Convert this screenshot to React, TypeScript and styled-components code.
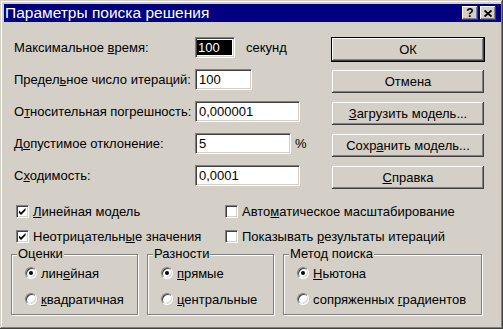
import styled, { createGlobalStyle } from "styled-components";

const GlobalStyle = createGlobalStyle`
  body {
    margin: 0;
    background: #d4d0c8;
    font-family: "Liberation Sans", Arial, sans-serif;
    font-size: 13px;
    color: #000;
  }
`;

const Window = styled.div`
  width: 503px;
  height: 329px;
  box-sizing: border-box;
  padding: 4px 2px 3px 4px;
  background: #d4d0c8;
  box-shadow: inset -1px -1px #404040, inset 1px 1px #d4d0c8,
    inset -2px -2px #808080, inset 2px 2px #fff;
  display: flex;
  flex-direction: column;
`;

const TitleBar = styled.div`
  height: 18px;
  background: #000080;
  display: flex;
  align-items: center;
  padding: 0 5px 0 1px;
`;

const TitleText = styled.span`
  flex: 1;
  color: #fff;
  font-size: 15.5px;
  line-height: 18px;
  white-space: nowrap;
`;

const TitleButton = styled.div<{ $gap?: number }>`
  width: 16px;
  height: 14px;
  box-sizing: border-box;
  margin-left: ${(p) => p.$gap ?? 0}px;
  background: #d4d0c8;
  box-shadow: inset -1px -1px #404040, inset 1px 1px #fff,
    inset -2px -2px #808080;
  display: flex;
  align-items: center;
  justify-content: center;
  font-weight: bold;
  font-size: 12px;
  line-height: 14px;
`;

const Body = styled.div`
  flex: 1;
  padding: 15px 0 0 7px;
  display: flex;
  flex-direction: column;
`;

const TopSection = styled.div`
  display: flex;
`;

const Form = styled.div`
  width: 318px;
  margin-left: 3px;
  display: flex;
  flex-direction: column;
  gap: 11px;
`;

const Row = styled.div`
  display: flex;
  align-items: center;
  height: 21px;
`;

const Label = styled.span`
  width: 181px;
  white-space: nowrap;
`;

const Field = styled.div<{ $width: number }>`
  width: ${(p) => p.$width}px;
  height: 21px;
  box-sizing: border-box;
  background: #fff;
  border: 1px solid;
  border-color: #808080 #fff #fff #808080;
  box-shadow: inset 1px 1px #404040, inset -1px -1px #d4d0c8;
  padding: 0 3px;
  display: flex;
  align-items: center;
`;

const Selected = styled.span`
  background: #000;
  color: #fff;
  align-self: stretch;
  margin: 2px -1px 2px -2px;
  padding-left: 1px;
  flex: 1;
  display: flex;
  align-items: center;
`;

const Suffix = styled.span<{ $gap: number }>`
  margin-left: ${(p) => p.$gap}px;
`;

const ButtonColumn = styled.div`
  margin-top: 1px;
  width: 152px;
  display: flex;
  flex-direction: column;
  gap: 9px;
`;

const Button = styled.div<{ $default?: boolean }>`
  height: 23px;
  box-sizing: border-box;
  background: #d4d0c8;
  box-shadow: inset -1px -1px #404040, inset 1px 1px #fff,
    inset -2px -2px #808080;
  outline: ${(p) => (p.$default ? "1px solid #000" : "none")};
  display: flex;
  align-items: center;
  justify-content: center;
  white-space: nowrap;
`;

const Checks = styled.div`
  margin: 15px 0 0 5px;
  display: grid;
  grid-template-columns: 209px 1fr;
  row-gap: 10px;
`;

const CheckRow = styled.div`
  height: 15px;
  display: flex;
  align-items: center;
  gap: 4px;
  white-space: nowrap;
`;

const CheckBox = styled.div`
  width: 13px;
  height: 13px;
  box-sizing: border-box;
  background: #fff;
  border: 1px solid;
  border-color: #808080 #fff #fff #808080;
  box-shadow: inset 1px 1px #404040, inset -1px -1px #d4d0c8;
  display: flex;
  align-items: center;
  justify-content: center;
`;

const Groups = styled.div`
  margin-top: 10px;
  display: flex;
  gap: 9px;
`;

const Group = styled.div<{ $width: number }>`
  position: relative;
  width: ${(p) => p.$width}px;
  height: 61px;
  box-sizing: border-box;
  border: 1px solid #808080;
  box-shadow: inset 1px 1px #fff, 1px 1px #fff;
  padding: 10px 0 0 13px;
  display: flex;
  flex-direction: column;
  gap: 10px;
`;

const Legend = styled.span`
  position: absolute;
  top: -9px;
  left: 5px;
  padding: 0 1px;
  background: #d4d0c8;
  line-height: 15px;
`;

const RadioRow = styled.div`
  height: 16px;
  display: flex;
  align-items: center;
  gap: 4px;
  white-space: nowrap;
`;

const Radio = styled.div<{ $checked?: boolean }>`
  width: 12px;
  height: 12px;
  box-sizing: border-box;
  border-radius: 50%;
  background: #fff;
  border: 1px solid;
  border-color: #808080 #fff #fff #808080;
  box-shadow: inset 1px 1px #404040, inset -1px -1px #d4d0c8;
  display: flex;
  align-items: center;
  justify-content: center;

  &::after {
    content: "";
    width: 4px;
    height: 4px;
    border-radius: 50%;
    background: ${(p) => (p.$checked ? "#000" : "transparent")};
  }
`;

const Check = () => (
  <svg width="9" height="9" viewBox="0 0 9 9">
    <path d="M1 3.5 L3 5.5 L7.5 1 L7.5 3.5 L3 8 L1 6 Z" fill="#000" />
  </svg>
);

const CloseGlyph = () => (
  <svg width="8" height="7" viewBox="0 0 8 7">
    <path d="M0.5 0.5 L7.5 6.5 M7.5 0.5 L0.5 6.5" stroke="#000" strokeWidth="1.8" />
  </svg>
);

const fields = [
  { label: <>Максимальное <u>в</u>ремя:</>, value: "100", width: 40, selected: true, suffix: "секунд", gap: 11 },
  { label: <>Предел<u>ь</u>ное число итераций:</>, value: "100", width: 57 },
  { label: <>О<u>т</u>носительная погрешность:</>, value: "0,000001", width: 105 },
  { label: <>Д<u>о</u>пустимое отклонение:</>, value: "5", width: 96, suffix: "%", gap: 4 },
  { label: <>С<u>х</u>одимость:</>, value: "0,0001", width: 105 },
];

const buttons = [
  { text: <>ОК</>, def: true },
  { text: <>Отмена</> },
  { text: <><u>З</u>агрузить модель...</> },
  { text: <>Сохр<u>а</u>нить модель...</> },
  { text: <><u>С</u>правка</> },
];

const groups = [
  { title: "Оценки", width: 127, items: [<>лин<u>е</u>йная</>, <><u>к</u>вадратичная</>] },
  { title: "Разности", width: 127, items: [<><u>п</u>рямые</>, <><u>ц</u>ентральные</>] },
  { title: "Метод поиска", width: 199, items: [<><u>Н</u>ьютона</>, <>сопряженных <u>г</u>радиентов</>] },
];

export default function App() {
  return (
    <>
      <GlobalStyle />
      <Window>
        <TitleBar>
          <TitleText>Параметры поиска решения</TitleText>
          <TitleButton>?</TitleButton>
          <TitleButton $gap={2}>
            <CloseGlyph />
          </TitleButton>
        </TitleBar>
        <Body>
          <TopSection>
            <Form>
              {fields.map((f, i) => (
                <Row key={i}>
                  <Label>{f.label}</Label>
                  <Field $width={f.width}>
                    {f.selected ? <Selected>{f.value}</Selected> : f.value}
                  </Field>
                  {f.suffix && <Suffix $gap={f.gap ?? 0}>{f.suffix}</Suffix>}
                </Row>
              ))}
            </Form>
            <ButtonColumn>
              {buttons.map((b, i) => (
                <Button key={i} $default={b.def}>
                  {b.text}
                </Button>
              ))}
            </ButtonColumn>
          </TopSection>
          <Checks>
            <CheckRow>
              <CheckBox>
                <Check />
              </CheckBox>
              <span>
                <u>Л</u>инейная модель
              </span>
            </CheckRow>
            <CheckRow>
              <CheckBox />
              <span>
                Авто<u>м</u>атическое масштабирование
              </span>
            </CheckRow>
            <CheckRow>
              <CheckBox>
                <Check />
              </CheckBox>
              <span>
                Неотрицательн<u>ы</u>е значения
              </span>
            </CheckRow>
            <CheckRow>
              <CheckBox />
              <span>
                Показывать <u>р</u>езультаты итераций
              </span>
            </CheckRow>
          </Checks>
          <Groups>
            {groups.map((g) => (
              <Group key={g.title} $width={g.width}>
                <Legend>{g.title}</Legend>
                {g.items.map((it, i) => (
                  <RadioRow key={i}>
                    <Radio $checked={i === 0} />
                    <span>{it}</span>
                  </RadioRow>
                ))}
              </Group>
            ))}
          </Groups>
        </Body>
      </Window>
    </>
  );
}
